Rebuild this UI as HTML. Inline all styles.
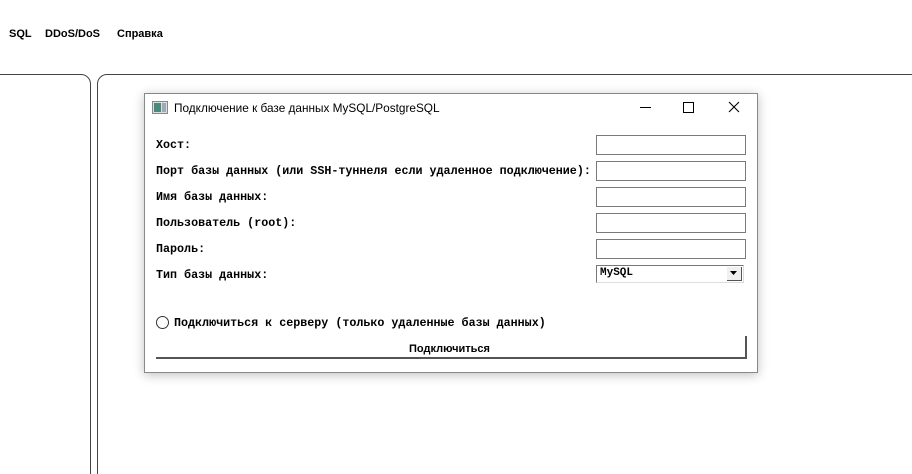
<!DOCTYPE html>
<html style="width:912px;height:474px;overflow:hidden"><head><meta charset="utf-8"><style>
body{margin:0;width:912px;height:474px;background:#fff;position:relative;overflow:hidden;font-family:"Liberation Sans",sans-serif}
.a{position:absolute}
.menu{top:28px;font:bold 11px "Liberation Sans",sans-serif;color:#000}
.lbl{position:absolute;left:156px;font:bold 11.7px "Liberation Mono",monospace;color:#000;white-space:pre}
.inp{position:absolute;left:596px;width:148px;height:18px;border:1px solid #7a7a7a;background:#fff}
</style></head><body>
<div class="a menu" style="left:9px">SQL</div>
<div class="a menu" style="left:45px">DDoS/DoS</div>
<div class="a menu" style="left:117px">Справка</div>
<div class="a" style="left:-10px;top:74px;width:99px;height:420px;border:1px solid #444;border-radius:0 10px 0 0"></div>
<div class="a" style="left:97px;top:74px;width:830px;height:420px;border:1px solid #444;border-radius:10px 0 0 0"></div>
<div class="a" style="left:144px;top:93px;width:612px;height:278px;border:1px solid #888;background:#fff;box-shadow:0 2px 10px rgba(0,0,0,0.25)"></div>
<svg class="a" style="left:152px;top:101px" width="16" height="13"><rect x="0.5" y="0.5" width="15" height="12" fill="#ddd" stroke="#888"/><rect x="2" y="2" width="7" height="9" fill="#4a8a7a"/><rect x="10" y="2" width="4" height="9" fill="#9ab"/></svg>
<div class="a" style="left:174px;top:101px;font-size:11.8px;color:#000">Подключение к базе данных MySQL/PostgreSQL</div>
<div class="a" style="left:640px;top:107px;width:11px;height:1px;background:#000"></div>
<div class="a" style="left:683px;top:102px;width:9px;height:9px;border:1px solid #000"></div>
<svg class="a" style="left:728px;top:101px" width="12" height="12"><path d="M1 1L11 11M11 1L1 11" stroke="#000" stroke-width="1.1"/></svg>
<div class="lbl" style="top:138px">Хост:</div>
<div class="lbl" style="top:164px">Порт базы данных (или SSH-туннеля если удаленное подключение):</div>
<div class="lbl" style="top:190px">Имя базы данных:</div>
<div class="lbl" style="top:216px">Пользователь (root):</div>
<div class="lbl" style="top:242px">Пароль:</div>
<div class="lbl" style="top:268px">Тип базы данных:</div>
<div class="inp" style="top:135px"></div>
<div class="inp" style="top:161px"></div>
<div class="inp" style="top:187px"></div>
<div class="inp" style="top:213px"></div>
<div class="inp" style="top:239px"></div>
<div class="a" style="left:596px;top:265px;width:146px;height:16px;border-top:1px solid #777;border-left:1px solid #777;border-right:1px solid #ddd;border-bottom:1px solid #ddd"></div>
<div class="a" style="left:600px;top:267px;font:bold 11px 'Liberation Mono',monospace;color:#000">MySQL</div>
<div class="a" style="left:727px;top:267px;width:14px;height:13px;background:#f0f0f0;border-right:1px solid #555;border-bottom:1px solid #555"></div>
<svg class="a" style="left:730px;top:271px" width="8" height="5"><path d="M0 0H7L3.5 4Z" fill="#000"/></svg>
<div class="a" style="left:156px;top:316px;width:11px;height:11px;border:1px solid #333;border-radius:50%"></div>
<div class="lbl" style="left:174px;top:316px">Подключиться к серверу (только удаленные базы данных)</div>
<div class="a" style="left:156px;top:336px;width:589px;height:21px;border-right:2px solid #555;border-bottom:2px solid #555"></div>
<div class="a" style="left:409px;top:343px;font:bold 11px 'Liberation Sans',sans-serif;color:#000">Подключиться</div>
</body></html>
